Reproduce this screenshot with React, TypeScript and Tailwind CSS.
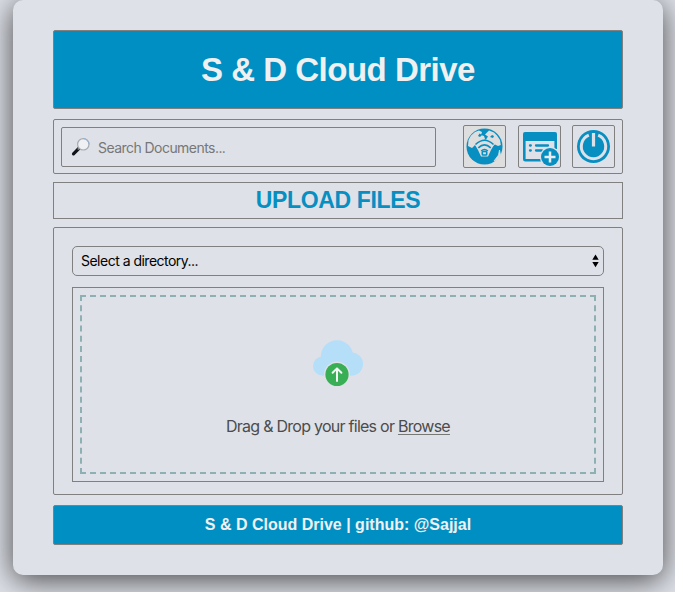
import React from "react";

function GlobeIcon() {
  return (
    <svg viewBox="0 0 41 41" className="h-[41px] w-[41px]">
      <circle cx="20.5" cy="20.5" r="18" fill="#078fc2" />
      <path d="M4.500 14 7 9.500l4-3.500 4-1.500 3 1.500-1 3 3 1 1 3-4 3-3 4-3-1-3 3-4-2Z" fill="#dedede" />
      <path d="m25 4.500 5 2 3 3 3 4.500.8 5-2.800 1-3-1.500-3 2-3-4-3-3 2-3-3-2Z" fill="#dedede" />
      <path d="M15.500 7.500 18 9l-2 2-2-1ZM28 9l2 1-1 2-3-1Z" fill="#078fc2" />
      <path d="M11 19q9.500-11 19 0l-3 5-3 6.500h-7L14 24Z" fill="#dedede" />
      <path d="m35.500 24-1 5-4.500 6 3.500-1.500 3-4.500Z" fill="#dedede" stroke="#dedede" strokeWidth=".8" />
      <path d="M11.500 18.500q9-8.500 18 0M14.300 21.800q6.200-5.800 12.400 0M17.200 25q3.300-3 6.600 0" fill="none" stroke="#078fc2" strokeWidth="1.600" />
      <rect x="18.300" y="25.500" width="4.400" height="3.500" rx=".8" fill="#dedede" stroke="#078fc2" strokeWidth="1.600" />
    </svg>
  );
}

function AddFormIcon() {
  return (
    <svg viewBox="0 0 41 41" className="h-[41px] w-[41px]">
      <path d="M4 8q0-2 2-2h30q2 0 2 2v7H4Z" fill="#078fc2" />
      <path d="M5.300 14v19.300q0 1 1 1H24M36.700 14v9" fill="none" stroke="#078fc2" strokeWidth="2.600" />
      <path d="M11 19.500h.8M11 24.500h.8M17 19.500H29M17 24.500H23" fill="none" stroke="#078fc2" strokeWidth="2.300" strokeLinecap="round" />
      <circle cx="31" cy="31" r="10.200" fill="#dee1e8" />
      <circle cx="31" cy="31" r="9" fill="#078fc2" />
      <path d="M31 25.500v11M25.500 31h11" stroke="#e7edf2" strokeWidth="2.500" />
    </svg>
  );
}

function PowerIcon() {
  return (
    <svg viewBox="0 0 41 41" className="h-[41px] w-[41px]">
      <circle cx="20.500" cy="20.500" r="16.500" fill="#078fc2" />
      <path d="M15.800 9.200a12.200 12.200 0 1 0 9.400 0" fill="none" stroke="#dee1e8" strokeWidth="3" />
      <path d="M20.500 7v13.500" stroke="#dee1e8" strokeWidth="3.200" />
    </svg>
  );
}

function SearchIcon() {
  return (
    <svg viewBox="0 0 20 20" className="h-5 w-5 shrink-0">
      <path d="m7.800 11.500-5.300 5.300" stroke="#111318" strokeWidth="3.200" strokeLinecap="round" />
      <path d="m8.800 10.600-2 2" stroke="#777b80" strokeWidth="2" />
      <circle cx="12.300" cy="7.300" r="5.700" fill="#eef0f4" stroke="#a7aab0" strokeWidth="1.200" />
      <path d="M12.300 1.600A5.700 5.700 0 0 1 18 7.300" fill="none" stroke="#90b3d8" strokeWidth="1" />
    </svg>
  );
}

function CloudUpload() {
  return (
    <svg viewBox="0 0 50 48" className="h-12 w-[50px]">
      <g fill="#b5def9">
        <circle cx="24" cy="16.500" r="16.200" />
        <circle cx="9.500" cy="26" r="9.500" />
        <circle cx="38.500" cy="24" r="11.500" />
        <path d="M9 18h30v17.500H9Z" />
      </g>
      <circle cx="24" cy="34.500" r="13" fill="#dee1e8" />
      <circle cx="24" cy="34.500" r="11.600" fill="#38ae55" />
      <path d="M24 41V28.500m-4.400 4.300 4.400-4.400 4.400 4.400" fill="none" stroke="#f2f7f4" strokeWidth="2" strokeLinecap="round" strokeLinejoin="round" />
    </svg>
  );
}

const tools = [
  { label: "Network", icon: <GlobeIcon />, tone: "bg-[#dedede]" },
  { label: "Add form", icon: <AddFormIcon />, tone: "bg-[#dee1e8]" },
  { label: "Power", icon: <PowerIcon />, tone: "bg-[#dee1e8]" },
];

export default function App() {
  return (
    <div className="h-[592px] overflow-hidden bg-[#dee1e8] pl-[13px] font-['Liberation_Sans',Arial,sans-serif]">
      <main className="flex h-[575px] w-[650px] flex-col rounded-[10px] bg-[#dee1e8] px-10 pt-[30px] shadow-[0_5px_30px_rgba(0,0,0,0.7)]">
        <header className="flex h-[79px] items-center justify-center rounded-[2px] border border-[#808080] bg-[#008fc2]">
          <h1 className="whitespace-nowrap text-[33px] font-bold leading-[38px] tracking-[-0.5px] text-[#f0f0f0]">S &amp; D Cloud Drive</h1>
        </header>

        <div className="mt-[10px] flex h-[55px] items-center justify-between rounded-[2px] border border-[#808080] px-[7px]">
          <label className="flex h-10 w-[375px] items-center rounded-[2px] border border-[#808080] pl-[9px]">
            <SearchIcon />
            <input aria-label="Search" placeholder="Search Documents..." className="ml-[7px] w-56 bg-transparent pt-[2px] font-['Inter',sans-serif] text-[14px] tracking-[-0.55px] outline-none placeholder:text-[#777777]" />
          </label>
          <div className="flex w-[152px] justify-between">
            {tools.map((tool) => (
              <button key={tool.label} aria-label={tool.label} className={`flex h-[43px] w-[43px] items-center justify-center rounded-[2px] border border-[#808080] ${tool.tone}`}>
                {tool.icon}
              </button>
            ))}
          </div>
        </div>

        <div className="mt-2 flex h-[37px] items-center justify-center border border-[#808080]">
          <h2 className="whitespace-nowrap pb-px text-[23px] font-bold leading-7 tracking-[-0.35px] text-[#078fc2]">UPLOAD FILES</h2>
        </div>

        <section className="mt-2 h-[268px] rounded-[2px] border border-[#808080] px-[18px] pt-[18px]">
          <button className="flex h-[30px] w-full items-center justify-between rounded-[5px] border border-[#808080] pl-2 pr-1 text-black">
            <span className="pb-[2px] font-['Inter',sans-serif] text-[14px] tracking-[-0.51px]">Select a directory...</span>
            <svg viewBox="0 0 7 14" className="h-[14px] w-[7px]">
              <path d="m3.500.5 3.200 5.300H.3ZM.3 8h6.400l-3.200 5.300Z" />
            </svg>
          </button>
          <div className="mt-[11px] h-[195px] border border-[#808080] p-[7px]">
            <div className="flex h-full flex-col items-center border-2 border-dashed border-[#8eb0b3] pt-[43px]">
              <CloudUpload />
              <p className="mt-[26px] whitespace-nowrap font-['Inter',sans-serif] text-[16px] leading-6 tracking-[-0.74px] text-[#4c4c4c]">
                Drag &amp; Drop your files or <span className="underline decoration-[#777] decoration-1 underline-offset-2">Browse</span>
              </p>
            </div>
          </div>
        </section>

        <footer className="mt-[10px] flex h-10 items-center justify-center rounded-[2px] border border-[#808080] bg-[#008fc2] text-[16px] font-bold text-[#f0f0f0]">
          <span className="whitespace-nowrap">S &amp; D Cloud Drive | github: @Sajjal</span>
        </footer>
      </main>
    </div>
  );
}
